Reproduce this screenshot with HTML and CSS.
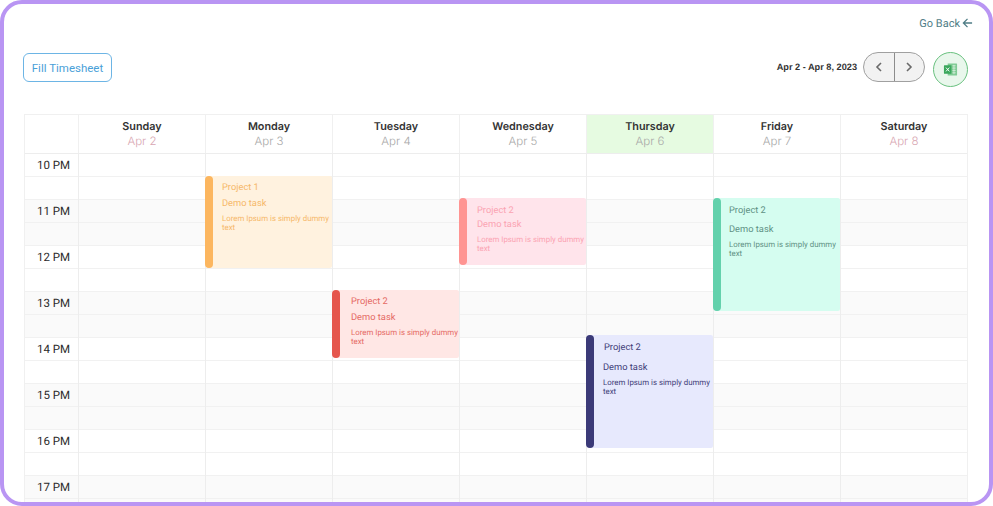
FILE: index.html
```html
<!DOCTYPE html>
<html lang="en">
<head>
<meta charset="utf-8">
<title>Timesheet calendar</title>
<link rel="stylesheet" href="styles.css">
</head>
<body>
<main class="frame">
  <div class="topbar"><a class="back">Go Back<svg class="back-icon" viewBox="0 0 12 12"><path d="M11 6H1.500M6 1.500 1.500 6 6 10.500"/></svg></a></div>
  <div class="toolbar">
    <button class="fill">Fill Timesheet</button>
    <div class="controls">
      <span class="range">Apr 2 - Apr 8, 2023</span>
      <div class="pager">
        <button class="page"><svg viewBox="0 0 10 12"><path d="M7 2 3 6l4 4"/></svg></button>
        <button class="page page-next"><svg viewBox="0 0 10 12"><path d="M3 2l4 4-4 4"/></svg></button>
      </div>
      <button class="excel"><svg viewBox="0 0 16 16"><path class="xl-sheet" d="M5 1.500h9.500a.5.5 0 0 1 .5.5v12a.5.5 0 0 1-.5.5H5z"/><path class="xl-grid" d="M10 4h3.500M10 6.500h3.500M10 9h3.500M10 11.500h3.500M11.700 3v10"/><rect class="xl-badge" x="1" y="3.500" width="8" height="9" rx=".6"/><path class="xl-x" d="M3.200 6 6.800 10M6.800 6 3.200 10"/></svg></button>
    </div>
  </div>
  <section class="calendar">
    <div class="head">
      <div class="head-corner"></div>
      <div class="head-day"><b>Sunday</b><span class="rose">Apr 2</span></div>
      <div class="head-day"><b>Monday</b><span>Apr 3</span></div>
      <div class="head-day"><b>Tuesday</b><span>Apr 4</span></div>
      <div class="head-day"><b>Wednesday</b><span>Apr 5</span></div>
      <div class="head-day today"><b>Thursday</b><span>Apr 6</span></div>
      <div class="head-day"><b>Friday</b><span>Apr 7</span></div>
      <div class="head-day"><b>Saturday</b><span class="rose">Apr 8</span></div>
    </div>
    <div class="body">
      <div class="hour"><span class="time">10 PM</span></div>
      <div class="hour alt"><span class="time">11 PM</span></div>
      <div class="hour"><span class="time">12 PM</span></div>
      <div class="hour alt"><span class="time">13 PM</span></div>
      <div class="hour"><span class="time">14 PM</span></div>
      <div class="hour alt"><span class="time">15 PM</span></div>
      <div class="hour"><span class="time">16 PM</span></div>
      <div class="hour alt"><span class="time">17 PM</span></div>
      <div class="days">
        <div class="day"></div>
        <div class="day">
          <article class="event orange" style="top:22px;height:92px"><h3>Project 1</h3><h4>Demo task</h4><p>Lorem Ipsum is simply dummy text</p></article>
        </div>
        <div class="day">
          <article class="event red" style="top:136px;height:68px"><h3>Project 2</h3><h4>Demo task</h4><p>Lorem Ipsum is simply dummy text</p></article>
        </div>
        <div class="day">
          <article class="event pink" style="top:44px;height:67px"><h3>Project 2</h3><h4>Demo task</h4><p>Lorem Ipsum is simply dummy text</p></article>
        </div>
        <div class="day">
          <article class="event indigo" style="top:181px;height:113px"><h3>Project 2</h3><h4>Demo task</h4><p>Lorem Ipsum is simply dummy text</p></article>
        </div>
        <div class="day">
          <article class="event mint" style="top:44px;height:113px"><h3>Project 2</h3><h4>Demo task</h4><p>Lorem Ipsum is simply dummy text</p></article>
        </div>
        <div class="day"></div>
      </div>
    </div>
  </section>
</main>
</body>
</html>
```
FILE: styles.css
```css
* { box-sizing: border-box; }
html, body { margin: 0; height: 100%; background: #fff; }
body { font-family: Roboto, "Liberation Sans", sans-serif; text-rendering: geometricPrecision; }
button { font: inherit; cursor: pointer; }

.frame {
  height: 506px;
  border: 4px solid #b995f3;
  border-radius: 22px;
  padding: 0 21px 0 20px;
  overflow: hidden;
  background: #fff;
}

.topbar { display: flex; justify-content: flex-end; height: 38px; padding-top: 12px; margin-right: -5px; }
.back { display: flex; align-items: center; gap: 2px; height: 14px; font-size: 11px; color: #4f7d86; }
.back-icon { width: 11px; height: 12px; fill: none; stroke: #4f7d86; stroke-width: 1.400; }

.toolbar { display: flex; justify-content: space-between; align-items: flex-start; height: 50px; padding-top: 10px; margin-bottom: 22px; }
.fill {
  width: 89px; height: 29px; margin: 1px 0 0 -1px; padding: 0;
  background: #fff; color: #4a9fd8;
  border: 1px solid #6db5e5; border-radius: 6px;
  font-size: 11.500px;
}
.controls { display: flex; align-items: flex-start; }
.range { font-family: "Liberation Sans", sans-serif; font-size: 9.200px; font-weight: 700; line-height: 30px; color: #333; margin-right: 6px; }
.pager { display: flex; width: 62px; height: 30px; border: 1px solid #a0a0a0; border-radius: 15px; background: #f2f2f2; overflow: hidden; }
.page { flex: 1; padding: 0; border: 0; background: none; display: flex; align-items: center; justify-content: center; }
.page-next { border-left: 1px solid #8c8c8c; }
.page svg { width: 10px; height: 12px; fill: none; stroke: #6a6a6a; stroke-width: 1.600; }
.excel { width: 35px; height: 35px; margin-left: 8px; padding: 0; border: 1px solid #69c17f; border-radius: 50%; background: #e9f7ec; display: flex; align-items: center; justify-content: center; }
.excel svg { width: 15px; height: 15px; }
.xl-sheet { fill: #7fcb94; }
.xl-grid { fill: none; stroke: #e6f5ea; stroke-width: .7; }
.xl-badge { fill: #3aa85c; }
.xl-x { fill: none; stroke: #fff; stroke-width: 1; }

.calendar { border: 1px solid #f0f0f0; border-bottom: 0; width: 944px; }
.head { display: grid; grid-template-columns: 53px repeat(7, 127px); height: 39px; border-bottom: 1px solid #ededed; }
.head-day { border-left: 1px solid #f0f0f0; display: flex; flex-direction: column; align-items: center; padding-top: 5px; font-family: Inter, sans-serif; }
.head-day b { font-size: 10.800px; font-weight: 600; line-height: 14px; color: #333; }
.head-day span { font-size: 11.500px; font-weight: 300; line-height: 15px; color: #a8a8a8; }
.head-day span.rose { color: #d8a6b2; }
.today { background: #e6fbe1; }

.body { position: relative; }
.hour {
  height: 46px;
  background: linear-gradient(#f1f1f1, #f1f1f1) 0 22px / 100% 1px no-repeat;
  border-bottom: 1px solid #f1f1f1;
}
.hour.alt { background-color: #fafafa; }
.time { display: block; width: 45px; text-align: right; font-size: 11.500px; line-height: 14px; padding-top: 4px; color: #2a2a2a; }

.days { position: absolute; inset: 0 0 0 53px; display: grid; grid-template-columns: repeat(7, 127px); }
.day { position: relative; border-left: 1px solid #ededed; }

.event {
  position: absolute; left: -1px; width: 127px;
  border-radius: 4px 2px 2px 4px;
  padding: 5px 0 0 17px;
}
.event::before { content: ""; position: absolute; left: 0; top: 0; bottom: 0; width: 8px; border-radius: 4px; background: var(--bar); }
.event h3 { margin: 0; font-size: 9.300px; font-weight: 400; line-height: 13px; }
.event h4 { margin: 3px 0 0; font-size: 9.300px; font-weight: 400; line-height: 13px; }
.event p { margin: 4px 0 0; font-size: 7.850px; line-height: 9.300px; }

.orange { background: #fff2df; color: #f6b869; --bar: #fcb65f; }
.red { background: #ffe7e5; color: #e56a64; --bar: #e5564d; padding-left: 19px; }
.pink { background: #ffe4eb; color: #fba3b2; --bar: #ff9492; padding-left: 18px; padding-top: 6px; }
.pink h4 { margin-top: 1px; }
.mint { background: #d5fdf0; color: #5f9184; --bar: #63d1ac; padding-left: 16px; padding-top: 6px; }
.mint h4 { margin-top: 6px; }
.indigo { background: #e7e9fd; color: #3f3d78; --bar: #3b3a78; padding-top: 6px; }
.indigo h3 { margin-left: 1px; }
.indigo h4 { margin-top: 7px; }
```
